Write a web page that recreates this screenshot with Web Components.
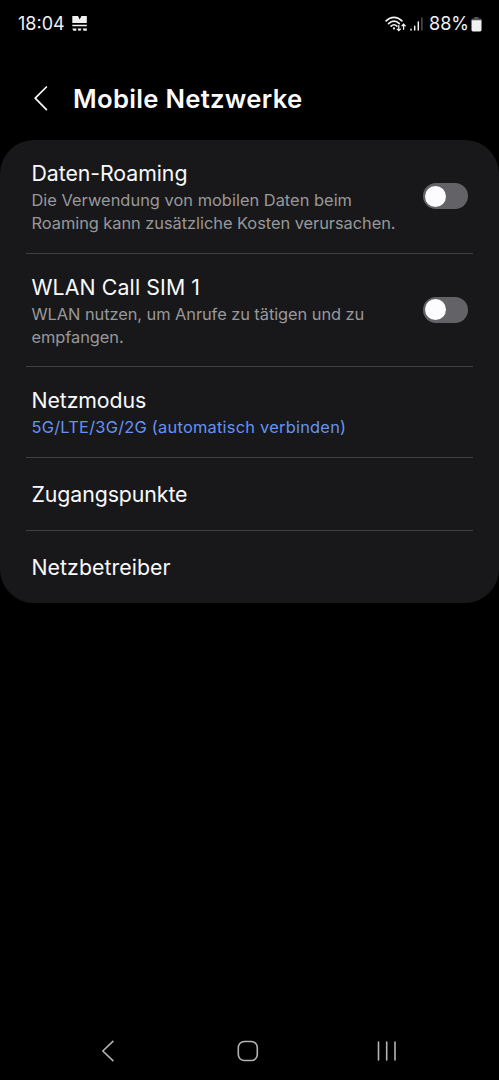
<!DOCTYPE html>
<html lang="de">
<head>
<meta charset="utf-8">
<meta name="viewport" content="width=device-width, initial-scale=1">
<title>Mobile Netzwerke</title>
<style>
	body {
		margin: 0;
		background: #000;
		color: #fafafc;
		font-family: Inter, Roboto, sans-serif;
	}
</style>
</head>
<body>
<settings-screen>
	<status-bar slot="status" time="18:04" battery="88%"></status-bar>
	<page-header slot="header">Mobile Netzwerke</page-header>
	<settings-card>
		<settings-row style="height: 114px; --title-track: -0.06px; --summary-track: -0.04px">
			Daten-Roaming
			<span slot="summary"><span style="letter-spacing: 0.02px">Die Verwendung von mobilen Daten beim</span><br>Roaming kann zusätzliche Kosten verursachen.</span>
			<toggle-switch slot="control"></toggle-switch>
		</settings-row>
		<settings-row style="height: 113px; --title-track: 0.12px; --summary-track: -0.06px">
			WLAN Call SIM 1
			<span slot="summary">WLAN nutzen, um Anrufe zu tätigen und zu<br>empfangen.</span>
			<toggle-switch slot="control"></toggle-switch>
		</settings-row>
		<settings-row style="height: 91px; --title-track: -0.1px; --summary-color: #6593f5; --summary-track: 0.24px">
			Netzmodus
			<span slot="summary">5G/LTE/3G/2G (automatisch verbinden)</span>
		</settings-row>
		<settings-row style="height: 73px; --title-track: -0.08px">Zugangspunkte</settings-row>
		<settings-row style="height: 72px; --title-track: 0.06px">Netzbetreiber</settings-row>
	</settings-card>
	<nav-bar slot="nav"></nav-bar>
</settings-screen>

<script>
class SettingsScreen extends HTMLElement {
	constructor() {
		super();
		this.attachShadow({ mode: 'open' }).innerHTML = `
			<style>
				:host {
					display: flex;
					flex-direction: column;
					height: 1080px;
					overflow: hidden;
				}
				main {
					flex: 1;
				}
			</style>
			<slot name="status"></slot>
			<slot name="header"></slot>
			<main><slot></slot></main>
			<slot name="nav"></slot>
		`;
	}
}

class StatusBar extends HTMLElement {
	constructor() {
		super();
		this.attachShadow({ mode: 'open' });
	}

	connectedCallback() {
		this.shadowRoot.innerHTML = `
			<style>
				:host {
					display: flex;
					align-items: center;
					justify-content: space-between;
					height: 48px;
					padding: 0 17px 0 18px;
					box-sizing: border-box;
					font-size: 18px;
					line-height: 48px;
					color: #f0f0f0;
				}
				div {
					display: flex;
					align-items: center;
				}
				svg {
					display: block;
				}
				.time {
					width: 54px;
				}
				.level {
					width: 42px;
					margin-left: 6px;
					letter-spacing: 0;
				}
			</style>
			<div>
				<span class="time">${this.getAttribute('time')}</span>
				<svg width="16" height="16" viewBox="0 0 16 16" fill="#f0f0f0">
					<path d="M.3 0H6l1.700 3.500L9.400 0h5.400v7H.3zM.3 8.700h14.500v1.600H.3zM.3 12.600h4v2.200h-3zM5.500 12.600h4l-1 2.200h-2zM10.700 12.600h4.100v2.200h-3.200z"/>
				</svg>
			</div>
			<div>
				<svg width="38" height="16" viewBox="0 0 38 16" fill="none" stroke="#f0f0f0" stroke-linecap="round">
					<g stroke-width="1.7">
						<path d="M1.1 4.800C5.700.1 12.300.1 16.900 4.800"/>
						<path d="M3.600 7.600c3.200-3.200 7.600-3.200 10.700 0"/>
						<path d="M6.100 10.200c1.800-1.800 4.100-1.800 5.800-.1"/>
					</g>
					<circle cx="9" cy="12.400" r="1.100" fill="#f0f0f0" stroke="none"/>
					<path d="M13.800 9.600v5M12.200 13.100l1.600 1.600 1.600-1.600M18.600 13.300v-5M17 9.800l1.600-1.600 1.600 1.600" stroke-width="1.300"/>
					<g stroke-width="1.500">
						<path d="M26 13.300v.8M29.700 10.200v3.900M33.300 6v8.100"/>
						<path d="M36.900 2v12.100" stroke="#505050"/>
					</g>
				</svg>
				<span class="level">${this.getAttribute('battery')}</span>
				<svg width="11" height="15" viewBox="0 0 11 15">
					<path d="M3.300 0h4.200v1.400h2.100q.9 0 .9 1V4H.5V2.400q0-1 .9-1h1.900z" fill="#555"/>
					<path d="M.5 3.200h10v9.900q0 1.400-1.400 1.400H1.900Q.5 14.500.5 13.100z" fill="#f0f0f0"/>
				</svg>
			</div>
		`;
	}
}

class PageHeader extends HTMLElement {
	constructor() {
		super();
		this.attachShadow({ mode: 'open' }).innerHTML = `
			<style>
				:host {
					display: flex;
					align-items: center;
					height: 92px;
					padding: 9px 0 0 33px;
					box-sizing: border-box;
				}
				svg {
					width: 40px;
					height: 26px;
				}
				h1 {
					margin: 0;
					font-size: 25.7px;
					font-weight: 600;
					line-height: 32px;
					letter-spacing: 0.28px;
					white-space: nowrap;
				}
			</style>
			<svg viewBox="0 0 40 26" fill="none" stroke="#fafafc" stroke-width="1.7" stroke-linecap="round" stroke-linejoin="round">
				<path d="M13.400 1 2.200 12.200l11.200 11.400"/>
			</svg>
			<h1><slot></slot></h1>
		`;
	}
}

class SettingsCard extends HTMLElement {
	constructor() {
		super();
		this.attachShadow({ mode: 'open' }).innerHTML = `
			<style>
				:host {
					display: block;
					padding: 0 26px;
					border-radius: 34px;
					background: #18181a;
				}
				::slotted(:not(:last-child)) {
					border-bottom: 1px solid #404042;
				}
			</style>
			<slot></slot>
		`;
	}
}

class SettingsRow extends HTMLElement {
	constructor() {
		super();
		this.attachShadow({ mode: 'open' }).innerHTML = `
			<style>
				:host {
					display: flex;
					align-items: center;
					justify-content: space-between;
					padding: 0 5px 0 5.5px;
					box-sizing: border-box;
				}
				.text {
					white-space: nowrap;
				}
				.title {
					font-size: 21.3px;
					line-height: 27px;
					letter-spacing: var(--title-track, 0);
				}
				/* summary sits a little lower without moving the centred title */
				.summary {
					margin: 2px 0 -2px;
					font-size: 16.4px;
					line-height: 23px;
					letter-spacing: var(--summary-track, 0);
					color: var(--summary-color, #98989b);
				}
			</style>
			<div class="text">
				<div class="title"><slot></slot></div>
				<div class="summary"><slot name="summary"></slot></div>
			</div>
			<slot name="control"></slot>
		`;
	}
}

class ToggleSwitch extends HTMLElement {
	constructor() {
		super();
		this.attachShadow({ mode: 'open' }).innerHTML = `
			<style>
				:host {
					display: flex;
					align-items: center;
					width: 45px;
					height: 26px;
					margin-bottom: 1px;
					padding: 0 2px;
					box-sizing: border-box;
					border-radius: 13px;
					background: #636266;
				}
				.thumb {
					width: 21px;
					height: 21px;
					border-radius: 50%;
					background: #fcfcff;
				}
			</style>
			<div class="thumb"></div>
		`;
	}
}

class NavBar extends HTMLElement {
	constructor() {
		super();
		this.attachShadow({ mode: 'open' }).innerHTML = `
			<style>
				:host {
					display: flex;
					justify-content: space-between;
					align-items: center;
					height: 58px;
					padding: 0 101px;
				}
				svg {
					width: 22px;
					height: 22px;
					overflow: visible;
					fill: none;
					stroke: #b4b4b4;
					stroke-width: 1.6;
					stroke-linecap: round;
					stroke-linejoin: round;
				}
			</style>
			<svg viewBox="0 0 22 22"><path d="M11.900 1.300 1.800 11l10.100 9.700"/></svg>
			<svg viewBox="0 0 22 22"><rect x="-.7" y="1.500" width="19" height="19" rx="6"/></svg>
			<svg viewBox="0 0 22 22"><path d="M2.500 2v18M10.700 2v18M19 2v18"/></svg>
		`;
	}
}

customElements.define('settings-screen', SettingsScreen);
customElements.define('status-bar', StatusBar);
customElements.define('page-header', PageHeader);
customElements.define('settings-card', SettingsCard);
customElements.define('settings-row', SettingsRow);
customElements.define('toggle-switch', ToggleSwitch);
customElements.define('nav-bar', NavBar);
</script>
</body>
</html>
